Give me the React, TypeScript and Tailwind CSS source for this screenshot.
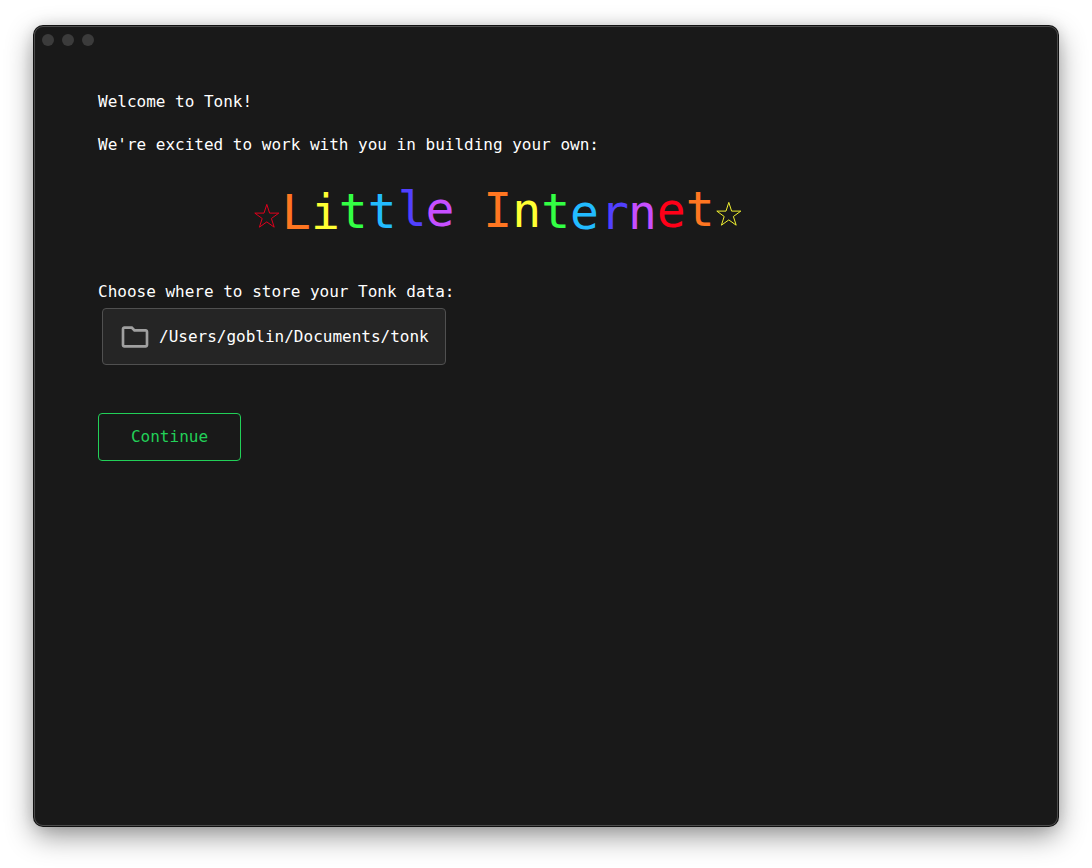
import { MdOutlineFolder } from "react-icons/md";

const letters: [string, string, number, number][] = [
  ["L", "#ff7621", 1, 1], ["i", "#ffff33", 1, 1], ["t", "#33ff44", 0, 0], ["t", "#22bbff", 0, -0.5], ["l", "#5140ff", 1, -2], ["e", "#c64fff", 0, -2], ["\u00a0", "#f00", 0, 0],
  ["I", "#ff7621", 0, -1], ["n", "#ffff33", 0, -0.7], ["t", "#33ff44", 0, 0], ["e", "#22bbff", 0, 1], ["r", "#5140ff", 1, 1], ["n", "#c64fff", 0, 0.5], ["e", "#ff0018", 0, -0.6], ["t", "#ff7621", 0, -2],
];

function Star({ className }: { className: string }) {
  return (
    <svg viewBox="0 0 28 28" className={className} fill="none" stroke="currentColor" strokeWidth="1">
      <path d="M13.8 2.4 16.6 11.1H25.8L18.4 16.5 21.2 25.2 13.8 19.9 6.4 25.2 9.2 16.5 1.8 11.1H11Z" />
    </svg>
  );
}

export default function App() {
  return (
    <div className="h-[868px] w-[1092px] overflow-hidden bg-white px-[34px] pt-[26px] font-['DejaVu_Sans_Mono',monospace] text-white">
      <main className="h-[800px] w-[1024px] rounded-[9px] bg-[#191919] shadow-[inset_0_0_0_1px_#4c4c4c,0_0_0_1px_#111,0_10px_28px_rgba(0,0,0,.42),0_0_14px_rgba(0,0,0,.12)]">
        <div className="flex gap-2 px-2 pt-2">
          <i className="size-3 rounded-full bg-[#3b3b3b]" />
          <i className="size-3 rounded-full bg-[#3b3b3b]" />
          <i className="size-3 rounded-full bg-[#3b3b3b]" />
        </div>
        <div className="px-16 pt-[44px] text-[16px] leading-[24px]">
          <p>Welcome to Tonk!</p>
          <p className="mt-[19px]">We're excited to work with you in building your own:</p>
          <h1 className="mt-[24px] flex h-[60px] items-center pl-[155px] text-[48px] leading-[60px]">
            <Star className="mt-[10px] size-[28px] text-[#e0001c]" />
            {letters.map(([c, color, x, y], i) => (
              <span key={i} style={{ color, transform: `translate(${x}px, ${y}px)` }}>{c}</span>
            ))}
            <Star className="mt-[5px] size-[28px] text-[#f0f030]" />
          </h1>
          <p className="mt-[39px]">Choose where to store your Tonk data:</p>
          <button className="mt-[4px] ml-1 flex h-[57px] w-[344px] items-center gap-2 rounded-[4px] border border-[#505050] bg-[#252525] px-4 whitespace-nowrap">
            <MdOutlineFolder className="size-8 shrink-0 text-[#a0a0a0]" />
            <span>/Users/goblin/Documents/tonk</span>
          </button>
          <button className="mt-12 flex h-[48px] w-[143px] items-center justify-center rounded-[4px] border border-[#22d058] text-[#22d058]">Continue</button>
        </div>
      </main>
    </div>
  );
}
